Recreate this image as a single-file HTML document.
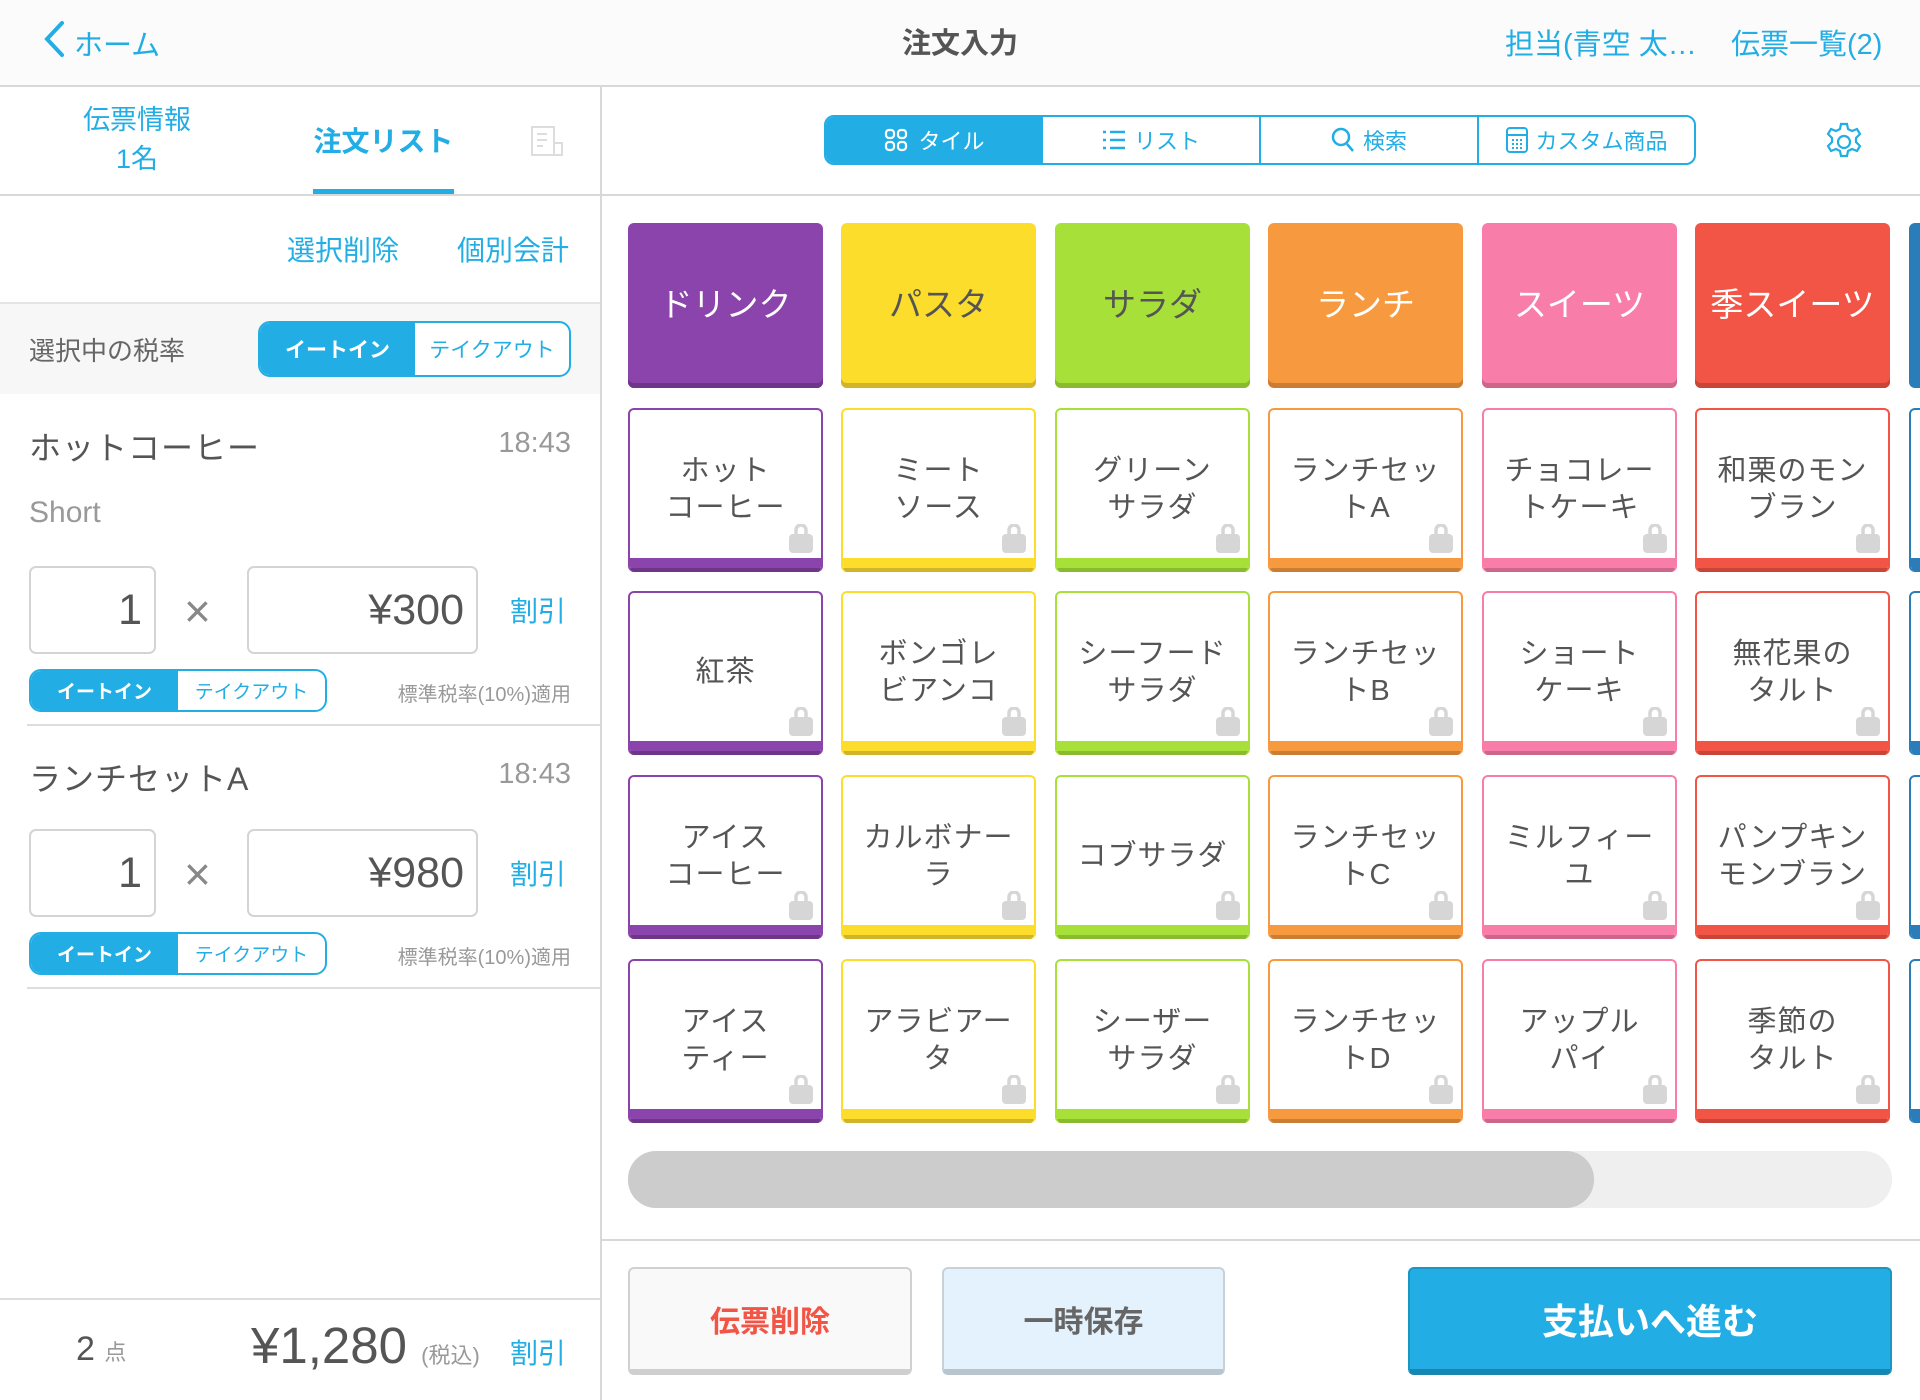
<!DOCTYPE html>
<html><head><meta charset="utf-8"><style>
*{box-sizing:border-box;margin:0;padding:0}
body{width:1920px;height:1400px;overflow:hidden;background:#fff;font-family:"Liberation Sans","Noto Sans CJK JP",sans-serif;position:relative;color:#555}
.a{position:absolute}
.blue{color:#22aee4}
.hdr{left:0;top:0;width:1920px;height:87px;background:#fbfbfb;border-bottom:2px solid #d8d8d8}
.cat{position:absolute;width:195px;height:165px;border-radius:6px;display:flex;align-items:center;justify-content:center;font-size:33px;color:#fff;padding-bottom:8px}
.tile{position:absolute;width:195px;height:164px;border-radius:6px;background:#fff;border:2px solid;border-bottom:none;overflow:hidden}
.tile .t{position:absolute;left:0;right:0;top:0;height:150px;display:flex;align-items:center;justify-content:center;text-align:center;font-size:29px;line-height:37px;color:#555;padding-top:9px;letter-spacing:1px}
.tile .s{position:absolute;left:-2px;right:-2px;bottom:0;height:14px}
.bag{position:absolute;right:6px;top:114px;width:28px;height:30px}
.tg{position:absolute;border:2px solid #22aee4;border-radius:12px;display:flex;overflow:hidden;background:#fff}
.tg div{display:flex;align-items:center;justify-content:center}
.tg .on{background:#22aee4;color:#fff;font-weight:bold}
.tg .off{color:#22aee4}
.box{position:absolute;border:2px solid #d4d4d4;border-radius:7px;background:#fff;display:flex;align-items:center;justify-content:flex-end;padding-right:12px;font-size:43px;color:#555}
</style></head><body>
<div class="a hdr"></div>
<svg class="a" style="left:42px;top:20px" width="24" height="38" viewBox="0 0 24 38"><path d="M20 3 L5 19 L20 35" stroke="#22aee4" stroke-width="4" fill="none" stroke-linecap="round"/></svg>
<div class="a blue" style="left:74px;top:22px;font-size:29px">ホーム</div>
<div class="a" style="left:880px;top:20px;font-size:29px;font-weight:bold;color:#555;width:160px;text-align:center">注文入力</div>
<div class="a blue" style="left:1505px;top:21px;font-size:29px">担当(青空 太…</div>
<div class="a blue" style="left:1731px;top:21px;font-size:29px">伝票一覧(2)</div>

<div class="a" style="left:600px;top:87px;width:2px;height:1313px;background:#d8d8d8"></div>
<div class="a blue" style="left:57px;top:101px;width:160px;text-align:center;font-size:27px;line-height:39px">伝票情報<br>1名</div>
<div class="a blue" style="left:313px;top:120px;width:141px;text-align:center;font-size:28px;font-weight:bold">注文リスト</div>
<div class="a" style="left:313px;top:189px;width:141px;height:5px;background:#22aee4"></div>
<svg class="a" style="left:530px;top:125px" width="34" height="32" viewBox="0 0 34 32"><path d="M2 2h22v28H2z M24 18h8v12H24" stroke="#ddd" stroke-width="2" fill="none"/><path d="M7 9h10M7 15h10M7 21h6" stroke="#ddd" stroke-width="2"/></svg>
<div class="a" style="left:0;top:194px;width:600px;height:2px;background:#d8d8d8"></div>
<div class="a blue" style="left:287px;top:229px;font-size:28px">選択削除</div>
<div class="a blue" style="left:457px;top:229px;font-size:28px">個別会計</div>
<div class="a" style="left:0;top:302px;width:600px;height:92px;background:#f7f7f7;border-top:2px solid #e4e4e4"></div>
<div class="a" style="left:29px;top:331px;font-size:26px;color:#666">選択中の税率</div>
<div class="tg" style="left:258px;top:321px;width:313px;height:56px"><div class="on" style="width:155px;font-size:21px">イートイン</div><div class="off" style="flex:1;font-size:21px">テイクアウト</div></div>

<div class="a" style="left:29px;top:423px;font-size:32px;color:#555;letter-spacing:1px">ホットコーヒー</div>
<div class="a" style="left:471px;top:427px;width:100px;text-align:right;font-size:29px;color:#999">18:43</div>
<div class="a" style="left:29px;top:496px;font-size:30px;color:#999">Short</div>
<div class="box" style="left:29px;top:566px;width:127px;height:88px">1</div>
<div class="a" style="left:184px;top:584px;font-size:46px;color:#888">×</div>
<div class="box" style="left:247px;top:566px;width:231px;height:88px">¥300</div>
<div class="a blue" style="left:510px;top:590px;font-size:28px">割引</div>
<div class="tg" style="left:29px;top:669px;width:298px;height:43px"><div class="on" style="width:147px;font-size:19px">イートイン</div><div class="off" style="flex:1;font-size:19px">テイクアウト</div></div>
<div class="a" style="left:351px;top:678px;width:220px;text-align:right;font-size:20px;color:#999">標準税率(10%)適用</div>
<div class="a" style="left:27px;top:724px;width:573px;height:2px;background:#ddd"></div>

<div class="a" style="left:29px;top:754px;font-size:32px;color:#555;letter-spacing:1px">ランチセットA</div>
<div class="a" style="left:471px;top:758px;width:100px;text-align:right;font-size:29px;color:#999">18:43</div>
<div class="box" style="left:29px;top:829px;width:127px;height:88px">1</div>
<div class="a" style="left:184px;top:847px;font-size:46px;color:#888">×</div>
<div class="box" style="left:247px;top:829px;width:231px;height:88px">¥980</div>
<div class="a blue" style="left:510px;top:853px;font-size:28px">割引</div>
<div class="tg" style="left:29px;top:932px;width:298px;height:43px"><div class="on" style="width:147px;font-size:19px">イートイン</div><div class="off" style="flex:1;font-size:19px">テイクアウト</div></div>
<div class="a" style="left:351px;top:941px;width:220px;text-align:right;font-size:20px;color:#999">標準税率(10%)適用</div>
<div class="a" style="left:27px;top:987px;width:573px;height:2px;background:#ddd"></div>

<div class="a" style="left:0;top:1298px;width:600px;height:2px;background:#ddd"></div>
<div class="a" style="left:76px;top:1330px;font-size:34px;color:#555">2 <span style="font-size:22px;color:#999">点</span></div>
<div class="a" style="left:251px;top:1316px;font-size:51px;color:#555">¥1,280 <span style="font-size:22px;color:#999">(税込)</span></div>
<div class="a blue" style="left:510px;top:1332px;font-size:28px">割引</div>

<div class="a" style="left:602px;top:194px;width:1318px;height:2px;background:#d8d8d8"></div>
<div class="a" style="left:824px;top:115px;width:872px;height:50px;border:2px solid #22aee4;border-radius:10px;overflow:hidden;display:flex;font-size:22px;color:#22aee4">
 <div style="width:217px;background:#22aee4;color:#fff;display:flex;align-items:center;justify-content:center;gap:10px"><svg width="24" height="24" viewBox="0 0 24 24" fill="none" stroke="#fff" stroke-width="2.2"><rect x="2" y="2" width="8" height="8" rx="3"/><rect x="14" y="2" width="8" height="8" rx="3"/><rect x="2" y="14" width="8" height="8" rx="3"/><rect x="14" y="14" width="8" height="8" rx="3"/></svg>タイル</div>
 <div style="width:218px;border-right:2px solid #22aee4;display:flex;align-items:center;justify-content:center;gap:8px"><svg width="24" height="22" viewBox="0 0 24 22" stroke="#22aee4" stroke-width="2.5"><path d="M1 3h3M1 11h3M1 19h3M8 3h15M8 11h15M8 19h15"/></svg>リスト</div>
 <div style="width:218px;border-right:2px solid #22aee4;display:flex;align-items:center;justify-content:center;gap:8px"><svg width="24" height="26" viewBox="0 0 24 26" fill="none" stroke="#22aee4" stroke-width="2.5"><circle cx="10" cy="10" r="8"/><path d="M16 17l6 7"/></svg>検索</div>
 <div style="flex:1;display:flex;align-items:center;justify-content:center;gap:6px"><svg width="24" height="28" viewBox="0 0 24 28" fill="none" stroke="#22aee4" stroke-width="2"><rect x="2" y="2" width="20" height="24" rx="3"/><path d="M2 9h20M7 14h2M11 14h2M15 14h2M7 18h2M11 18h2M15 18h2M7 22h2M11 22h2M15 22h2"/></svg>カスタム商品</div>
</div>
<svg class="a" style="left:1825px;top:122px" width="38" height="40" viewBox="0 0 38 40" fill="none" stroke="#22aee4" stroke-width="2.2"><path d="M16 2h6l1 5 4 2 5-2 3 5-4 4v4l4 4-3 5-5-2-4 2-1 5h-6l-1-5-4-2-5 2-3-5 4-4v-4l-4-4 3-5 5 2 4-2z"/><circle cx="19" cy="20" r="6"/></svg>

<div class="cat" style="left:628px;top:223px;background:#8b44ac;box-shadow:inset 0 -5px 0 #6f3589">ドリンク</div>
<div class="cat" style="left:841px;top:223px;background:#fcdd2c;color:#555;box-shadow:inset 0 -5px 0 #d0b42a">パスタ</div>
<div class="cat" style="left:1055px;top:223px;background:#a8e03a;color:#555;box-shadow:inset 0 -5px 0 #8abb2f">サラダ</div>
<div class="cat" style="left:1268px;top:223px;background:#f7993f;box-shadow:inset 0 -5px 0 #cc7d34">ランチ</div>
<div class="cat" style="left:1482px;top:223px;background:#f87ea9;box-shadow:inset 0 -5px 0 #cc678b">スイーツ</div>
<div class="cat" style="left:1695px;top:223px;background:#f25445;box-shadow:inset 0 -5px 0 #c84538">季スイーツ</div>
<div class="cat" style="left:1909px;top:223px;background:#2a7db8"></div>

<svg width="0" height="0" style="position:absolute"><defs><symbol id="bag" viewBox="0 0 28 30"><path d="M9 11V6a5 5 0 0 1 10 0v5" stroke="#d6d6d6" stroke-width="3.5" fill="none"/><rect x="2" y="10" width="24" height="19" rx="4" fill="#d6d6d6"/></symbol></defs></svg>

<div class="tile" style="left:628px;top:408px;border-color:#8b44ac"><div class="t">ホット<br>コーヒー</div><svg class="bag"><use href="#bag"/></svg><div class="s" style="background:#8b44ac;box-shadow:inset 0 -4px 0 #6f3589"></div></div>
<div class="tile" style="left:841px;top:408px;border-color:#fcdd2c"><div class="t">ミート<br>ソース</div><svg class="bag"><use href="#bag"/></svg><div class="s" style="background:#fcdd2c;box-shadow:inset 0 -4px 0 #d0b42a"></div></div>
<div class="tile" style="left:1055px;top:408px;border-color:#a8e03a"><div class="t">グリーン<br>サラダ</div><svg class="bag"><use href="#bag"/></svg><div class="s" style="background:#a8e03a;box-shadow:inset 0 -4px 0 #8abb2f"></div></div>
<div class="tile" style="left:1268px;top:408px;border-color:#f7993f"><div class="t">ランチセッ<br>トA</div><svg class="bag"><use href="#bag"/></svg><div class="s" style="background:#f7993f;box-shadow:inset 0 -4px 0 #cc7d34"></div></div>
<div class="tile" style="left:1482px;top:408px;border-color:#f87ea9"><div class="t">チョコレー<br>トケーキ</div><svg class="bag"><use href="#bag"/></svg><div class="s" style="background:#f87ea9;box-shadow:inset 0 -4px 0 #cc678b"></div></div>
<div class="tile" style="left:1695px;top:408px;border-color:#f25445"><div class="t">和栗のモン<br>ブラン</div><svg class="bag"><use href="#bag"/></svg><div class="s" style="background:#f25445;box-shadow:inset 0 -4px 0 #c84538"></div></div>
<div class="tile" style="left:1909px;top:408px;border-color:#2a7db8"><div class="s" style="background:#2a7db8"></div></div>

<div class="tile" style="left:628px;top:591px;border-color:#8b44ac"><div class="t">紅茶</div><svg class="bag"><use href="#bag"/></svg><div class="s" style="background:#8b44ac;box-shadow:inset 0 -4px 0 #6f3589"></div></div>
<div class="tile" style="left:841px;top:591px;border-color:#fcdd2c"><div class="t">ボンゴレ<br>ビアンコ</div><svg class="bag"><use href="#bag"/></svg><div class="s" style="background:#fcdd2c;box-shadow:inset 0 -4px 0 #d0b42a"></div></div>
<div class="tile" style="left:1055px;top:591px;border-color:#a8e03a"><div class="t">シーフード<br>サラダ</div><svg class="bag"><use href="#bag"/></svg><div class="s" style="background:#a8e03a;box-shadow:inset 0 -4px 0 #8abb2f"></div></div>
<div class="tile" style="left:1268px;top:591px;border-color:#f7993f"><div class="t">ランチセッ<br>トB</div><svg class="bag"><use href="#bag"/></svg><div class="s" style="background:#f7993f;box-shadow:inset 0 -4px 0 #cc7d34"></div></div>
<div class="tile" style="left:1482px;top:591px;border-color:#f87ea9"><div class="t">ショート<br>ケーキ</div><svg class="bag"><use href="#bag"/></svg><div class="s" style="background:#f87ea9;box-shadow:inset 0 -4px 0 #cc678b"></div></div>
<div class="tile" style="left:1695px;top:591px;border-color:#f25445"><div class="t">無花果の<br>タルト</div><svg class="bag"><use href="#bag"/></svg><div class="s" style="background:#f25445;box-shadow:inset 0 -4px 0 #c84538"></div></div>
<div class="tile" style="left:1909px;top:591px;border-color:#2a7db8"><div class="s" style="background:#2a7db8"></div></div>

<div class="tile" style="left:628px;top:775px;border-color:#8b44ac"><div class="t">アイス<br>コーヒー</div><svg class="bag"><use href="#bag"/></svg><div class="s" style="background:#8b44ac;box-shadow:inset 0 -4px 0 #6f3589"></div></div>
<div class="tile" style="left:841px;top:775px;border-color:#fcdd2c"><div class="t">カルボナー<br>ラ</div><svg class="bag"><use href="#bag"/></svg><div class="s" style="background:#fcdd2c;box-shadow:inset 0 -4px 0 #d0b42a"></div></div>
<div class="tile" style="left:1055px;top:775px;border-color:#a8e03a"><div class="t">コブサラダ</div><svg class="bag"><use href="#bag"/></svg><div class="s" style="background:#a8e03a;box-shadow:inset 0 -4px 0 #8abb2f"></div></div>
<div class="tile" style="left:1268px;top:775px;border-color:#f7993f"><div class="t">ランチセッ<br>トC</div><svg class="bag"><use href="#bag"/></svg><div class="s" style="background:#f7993f;box-shadow:inset 0 -4px 0 #cc7d34"></div></div>
<div class="tile" style="left:1482px;top:775px;border-color:#f87ea9"><div class="t">ミルフィー<br>ユ</div><svg class="bag"><use href="#bag"/></svg><div class="s" style="background:#f87ea9;box-shadow:inset 0 -4px 0 #cc678b"></div></div>
<div class="tile" style="left:1695px;top:775px;border-color:#f25445"><div class="t">パンプキン<br>モンブラン</div><svg class="bag"><use href="#bag"/></svg><div class="s" style="background:#f25445;box-shadow:inset 0 -4px 0 #c84538"></div></div>
<div class="tile" style="left:1909px;top:775px;border-color:#2a7db8"><div class="s" style="background:#2a7db8"></div></div>

<div class="tile" style="left:628px;top:959px;border-color:#8b44ac"><div class="t">アイス<br>ティー</div><svg class="bag"><use href="#bag"/></svg><div class="s" style="background:#8b44ac;box-shadow:inset 0 -4px 0 #6f3589"></div></div>
<div class="tile" style="left:841px;top:959px;border-color:#fcdd2c"><div class="t">アラビアー<br>タ</div><svg class="bag"><use href="#bag"/></svg><div class="s" style="background:#fcdd2c;box-shadow:inset 0 -4px 0 #d0b42a"></div></div>
<div class="tile" style="left:1055px;top:959px;border-color:#a8e03a"><div class="t">シーザー<br>サラダ</div><svg class="bag"><use href="#bag"/></svg><div class="s" style="background:#a8e03a;box-shadow:inset 0 -4px 0 #8abb2f"></div></div>
<div class="tile" style="left:1268px;top:959px;border-color:#f7993f"><div class="t">ランチセッ<br>トD</div><svg class="bag"><use href="#bag"/></svg><div class="s" style="background:#f7993f;box-shadow:inset 0 -4px 0 #cc7d34"></div></div>
<div class="tile" style="left:1482px;top:959px;border-color:#f87ea9"><div class="t">アップル<br>パイ</div><svg class="bag"><use href="#bag"/></svg><div class="s" style="background:#f87ea9;box-shadow:inset 0 -4px 0 #cc678b"></div></div>
<div class="tile" style="left:1695px;top:959px;border-color:#f25445"><div class="t">季節の<br>タルト</div><svg class="bag"><use href="#bag"/></svg><div class="s" style="background:#f25445;box-shadow:inset 0 -4px 0 #c84538"></div></div>
<div class="tile" style="left:1909px;top:959px;border-color:#2a7db8"><div class="s" style="background:#2a7db8"></div></div>

<div class="a" style="left:628px;top:1151px;width:1264px;height:57px;border-radius:28px;background:#efefef"></div>
<div class="a" style="left:628px;top:1151px;width:966px;height:57px;border-radius:28px;background:#cccccc"></div>
<div class="a" style="left:602px;top:1239px;width:1318px;height:2px;background:#d8d8d8"></div>

<div class="a" style="left:628px;top:1267px;width:284px;height:108px;border:2px solid #d0d0d0;border-bottom:6px solid #cfcfcf;border-radius:6px;background:#f9f9f9;display:flex;align-items:center;justify-content:center;font-size:30px;font-weight:bold;color:#f25445">伝票削除</div>
<div class="a" style="left:942px;top:1267px;width:283px;height:108px;border:2px solid #c8d0d8;border-bottom:6px solid #b8c4ce;border-radius:6px;background:#e4f2fd;display:flex;align-items:center;justify-content:center;font-size:30px;font-weight:bold;color:#666">一時保存</div>
<div class="a" style="left:1408px;top:1267px;width:484px;height:108px;border:2px solid #1b95c4;border-bottom:6px solid #1786b0;border-radius:6px;background:#22aee4;display:flex;align-items:center;justify-content:center;font-size:36px;font-weight:bold;color:#fff">支払いへ進む</div>
</body></html>
